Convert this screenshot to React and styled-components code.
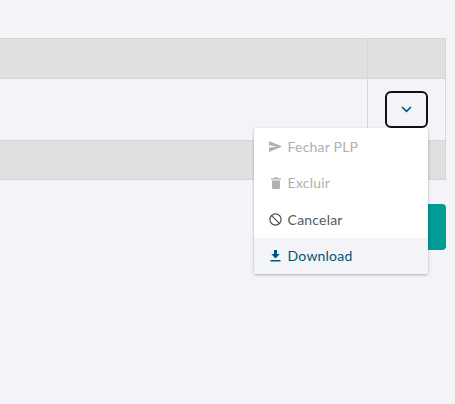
import React from 'react'
import styled, { createGlobalStyle } from 'styled-components'

const GlobalStyle = createGlobalStyle`
  html, body {
    margin: 0;
    padding: 0;
    background: #f2f4f8;
    font-family: Lato, "Liberation Sans", sans-serif;
  }
  body {
    overflow: hidden;
  }
`

const Page = styled.div`
  width: 455px;
  height: 404px;
  box-sizing: border-box;
  padding: 38px 9px 0 0;
`

const Table = styled.div`
  display: grid;
  grid-template-columns: 367px 1fr;
  border: 1px solid #d5d6d8;
  border-left: 0;
`

const HeadCell = styled.div`
  height: 39px;
  background: #e0e0e0;
  border-bottom: 1px solid #d5d6d8;
  border-left: ${(p) => (p.$last ? '1px solid #d5d6d8' : '0')};
`

const BodyCell = styled.div`
  height: 62px;
  box-sizing: border-box;
  border-left: ${(p) => (p.$last ? '1px solid #d5d6d8' : '0')};
  border-bottom: 1px solid #d5d6d8;
  position: relative;
  padding: 12px 17px;
  display: flex;
  justify-content: flex-end;
  align-items: flex-start;
`

const FootCell = styled.div`
  grid-column: 1 / 3;
  height: 38px;
  background: #e0e0e0;
`

const ToggleButton = styled.button`
  width: 43px;
  height: 37px;
  box-sizing: border-box;
  border: 2px solid #111;
  border-radius: 6px;
  background: transparent;
  padding: 0;
  display: flex;
  align-items: center;
  justify-content: center;
`

const Menu = styled.ul`
  position: absolute;
  top: 49px;
  right: 17px;
  width: 174px;
  margin: 0;
  padding: 0;
  list-style: none;
  background: #fff;
  border-radius: 2px;
  box-shadow: 0 1px 3px rgba(0, 0, 0, 0.3);
  z-index: 2;
`

const MenuItem = styled.li`
  height: 36.5px;
  box-sizing: border-box;
  padding-left: 15px;
  display: flex;
  align-items: center;
  gap: 6px;
  font-size: 14px;
  letter-spacing: 0.2px;
  margin-left: 0;
  color: ${(p) => (p.$active ? '#00567a' : p.$disabled ? '#b0b0b0' : '#555a60')};
  background: ${(p) => (p.$active ? '#f2f4f8' : 'transparent')};
`

const IconSlot = styled.span`
  width: 13px;
  height: 13px;
  margin-right: -0.4px;
  display: flex;
  align-items: center;
  justify-content: center;
  flex: none;
`

const ActionRow = styled.div`
  display: flex;
  justify-content: flex-end;
  margin-top: 24px;
`

const TealButton = styled.button`
  width: 120px;
  height: 46px;
  border: 0;
  border-radius: 4px;
  background: #009b94;
`

const Chevron = () => (
  <svg width="11" height="7" viewBox="0 0 11 7">
    <path d="M1 1 L5.5 5.4 L10 1" fill="none" stroke="#00567a" strokeWidth="1.7" />
  </svg>
)

const SendIcon = () => (
  <svg width="13" height="11" viewBox="0 0 13 11">
    <path d="M0 0 L13 5.5 L0 11 L0 6.8 L8 5.5 L0 4.2 Z" fill="#b0b0b0" />
  </svg>
)

const TrashIcon = () => (
  <svg width="10" height="12" viewBox="0 0 10 12">
    <path d="M0 1.2 H3 L3.6 0.2 H6.4 L7 1.2 H10 V2.6 H0 Z M1 3.4 H9 V11 Q9 12 8 12 H2 Q1 12 1 11 Z" fill="#b0b0b0" />
  </svg>
)

const BanIcon = () => (
  <svg width="13" height="13" viewBox="0 0 13 13">
    <circle cx="6.5" cy="6.5" r="5.6" fill="none" stroke="#4a4f58" strokeWidth="1.2" />
    <path d="M2.7 2.7 L10.3 10.3" stroke="#4a4f58" strokeWidth="1.2" />
  </svg>
)

const DownloadIcon = () => (
  <svg width="11" height="12" viewBox="0 0 11 12">
    <path d="M4 0 H7 V4 H9.8 L5.5 8.4 L1.2 4 H4 Z M0.5 10 H10.5 V11.5 H0.5 Z" fill="#00567a" />
  </svg>
)

const App = () => {
  return (
    <Page>
      <GlobalStyle />
      <Table>
        <HeadCell />
        <HeadCell $last />
        <BodyCell />
        <BodyCell $last>
          <ToggleButton>
            <Chevron />
          </ToggleButton>
          <Menu>
            <MenuItem $disabled>
              <IconSlot><SendIcon /></IconSlot>
              Fechar PLP
            </MenuItem>
            <MenuItem $disabled>
              <IconSlot><TrashIcon /></IconSlot>
              Excluir
            </MenuItem>
            <MenuItem>
              <IconSlot><BanIcon /></IconSlot>
              Cancelar
            </MenuItem>
            <MenuItem $active>
              <IconSlot><DownloadIcon /></IconSlot>
              Download
            </MenuItem>
          </Menu>
        </BodyCell>
        <FootCell />
      </Table>
      <ActionRow>
        <TealButton />
      </ActionRow>
    </Page>
  )
}

export default App
